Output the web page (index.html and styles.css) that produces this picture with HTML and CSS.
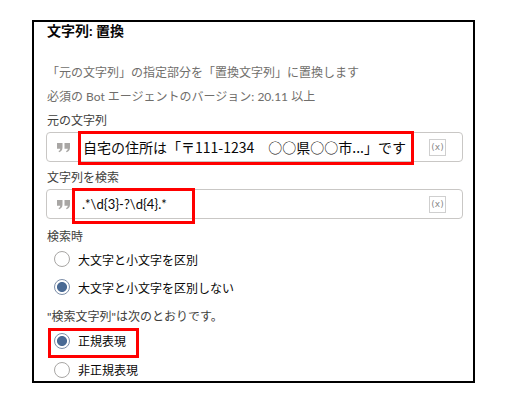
FILE: index.html
```html
<!DOCTYPE html>
<html lang="ja">
<head>
    <meta charset="UTF-8">
    <meta name="viewport" content="width=device-width, initial-scale=1.0">
    <title>文字列: 置換</title>
    <link rel="stylesheet" href="styles.css">
</head>
<body>

<div class="panel">
    <div class="title">文字列: 置換</div>
    <p class="desc first">「元の文字列」の指定部分を「置換文字列」に置換します</p>
    <p class="desc">必須の Bot エージェントのバージョン: 20.11 以上</p>

    <div class="field">
        <div class="label">元の文字列</div>
        <div class="input">
            <svg class="quote" width="14" height="10" viewBox="0 0 14 10">
                <path d="M0 0h5.5v4.6c0 2.4-1.2 4-3.4 4.6l-0.6-1.1c1.1-0.5 1.7-1.3 1.8-2.4H0z"/>
                <path d="M7.5 0h5.5v4.6c0 2.4-1.2 4-3.4 4.6l-0.6-1.1c1.1-0.5 1.7-1.3 1.8-2.4H7.5z"/>
            </svg>
            <span class="value jp">自宅の住所は「〒111-1234　○○県○○市...」です</span>
            <span class="var">(x)</span>
            <span class="mark mark-source"></span>
        </div>
    </div>

    <div class="field">
        <div class="label">文字列を検索</div>
        <div class="input">
            <svg class="quote" width="14" height="10" viewBox="0 0 14 10">
                <path d="M0 0h5.5v4.6c0 2.4-1.2 4-3.4 4.6l-0.6-1.1c1.1-0.5 1.7-1.3 1.8-2.4H0z"/>
                <path d="M7.5 0h5.5v4.6c0 2.4-1.2 4-3.4 4.6l-0.6-1.1c1.1-0.5 1.7-1.3 1.8-2.4H7.5z"/>
            </svg>
            <span class="value small">.*\d{3}-?\d{4}.*</span>
            <span class="var">(x)</span>
            <span class="mark mark-search"></span>
        </div>
    </div>

    <div class="group-label">検索時</div>
    <div class="radio"><span class="dot"></span>大文字と小文字を区別</div>
    <div class="radio checked"><span class="dot"></span>大文字と小文字を区別しない</div>

    <div class="group-label second">"検索文字列"は次のとおりです。</div>
    <div class="radio tall checked"><span class="dot"></span>正規表現<span class="mark mark-regex"></span></div>
    <div class="radio tall"><span class="dot"></span>非正規表現</div>
</div>

</body>
</html>
```

FILE: styles.css
```css
body {
    margin: 0;
    background-color: #ffffff;
    font-family: Lato, "Noto Sans CJK JP", sans-serif;
    color: #080707;
}
.panel {
    box-sizing: border-box;
    width: 443px;
    height: 363px;
    margin: 20px 0 0 32px;
    padding: 0 10px 0 12px;
    border: 2px solid #000000;
}
.title {
    font-size: 14px;
    font-weight: bold;
    line-height: 18px;
    padding-left: 1px;
}
.desc {
    margin: 0;
    padding-left: 1px;
    font-size: 12px;
    line-height: 24px;
    color: #706e6b;
}
.desc.first {
    margin-top: 21px;
}
.field {
    margin-top: 3px;
}
.field + .field {
    margin-top: 7px;
}
.label {
    font-size: 12px;
    line-height: 18px;
    color: #3e3e3c;
    padding-left: 1px;
}
.input {
    position: relative;
    box-sizing: border-box;
    height: 30px;
    margin-top: 2px;
    border: 1px solid #c9c7c5;
    border-radius: 4px;
    display: flex;
    align-items: center;
    padding: 0 16px 0 10px;
}
.quote {
    fill: #a8a6a4;
    margin-top: 1px;
}
.value {
    margin-left: 12px;
    flex: 1;
    font-size: 14px;
    white-space: nowrap;
}
.value.jp {
    font-family: "Noto Sans CJK JP", sans-serif;
    line-height: 20px;
}
.value.small {
    font-size: 13px;
    margin-left: 11px;
}
.var {
    box-sizing: border-box;
    width: 17px;
    height: 17px;
    border: 1px solid #cfcfcf;
    font-size: 9px;
    line-height: 15px;
    text-align: center;
    color: #8a8a8a;
    font-family: "DejaVu Sans", sans-serif;
}
.mark {
    position: absolute;
    box-sizing: border-box;
    border: 3px solid #ff0000;
}
.mark-source {
    left: 31px;
    top: -2px;
    width: 336px;
    height: 34px;
}
.mark-search {
    left: 25px;
    top: -2px;
    width: 123px;
    height: 36px;
}
.group-label {
    margin-top: 9px;
    font-size: 12px;
    line-height: 17px;
    color: #3e3e3c;
    padding-left: 1px;
}
.group-label.second {
    margin-top: 7px;
    line-height: 18px;
}
.radio {
    position: relative;
    display: flex;
    align-items: center;
    height: 28px;
    padding-left: 8px;
    font-size: 12px;
}
.radio.tall {
    height: 29px;
}
.dot {
    box-sizing: border-box;
    width: 16px;
    height: 16px;
    margin-right: 8px;
    border: 1px solid #a8a6a4;
    border-radius: 50%;
    background-color: #ffffff;
}
.radio.checked .dot {
    border-color: #7d8ea8;
    background: radial-gradient(circle, #4a6a94 0, #4a6a94 4.6px, #ffffff 5.4px);
}
.mark-regex {
    left: 2px;
    top: 2px;
    width: 91px;
    height: 30px;
}
```
